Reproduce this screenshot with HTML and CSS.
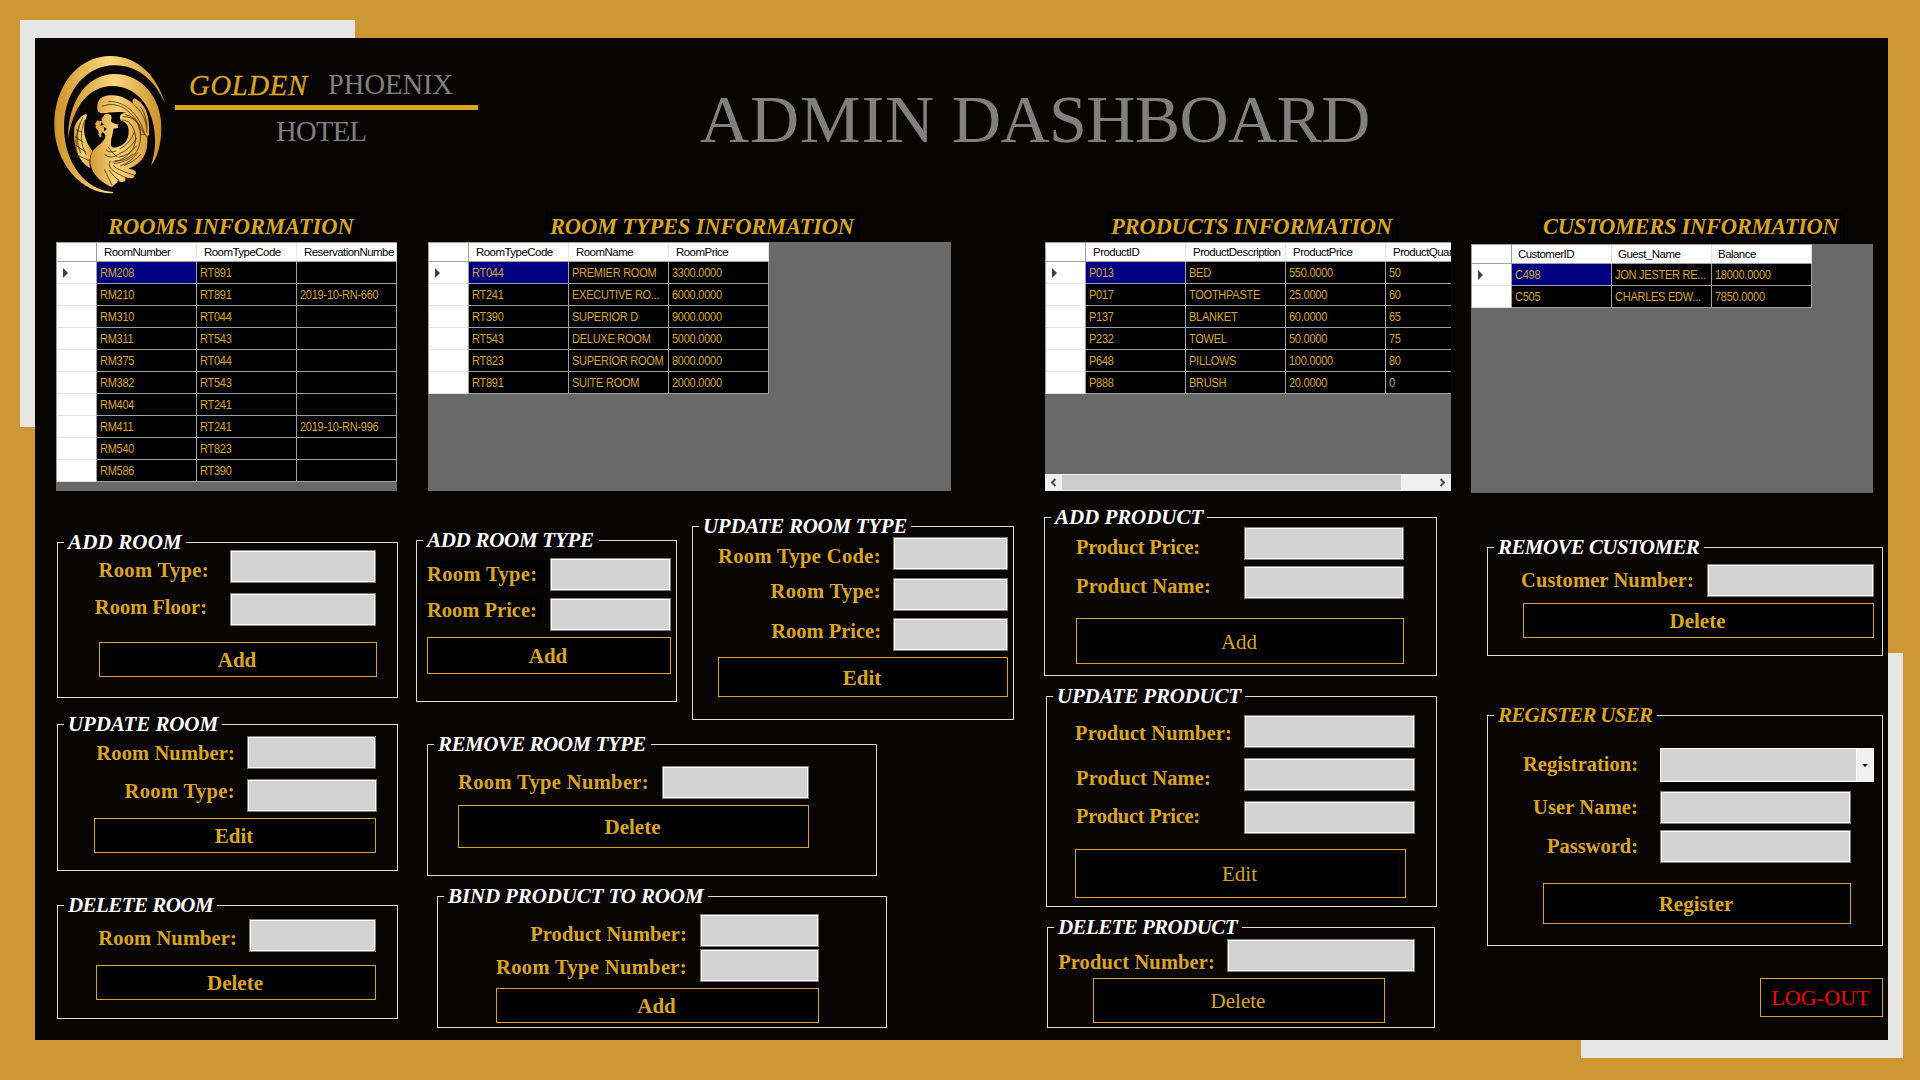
FILE: index.html
```html
<!DOCTYPE html>
<html lang="en">
<head>
<meta charset="utf-8">
<title>Golden Phoenix Hotel - Admin Dashboard</title>
<link rel="stylesheet" href="styles.css">
</head>
<body>
<div class="plate plate-top"></div>
<div class="plate plate-bottom"></div>
<main class="panel">
  <header class="header">
    <svg class="logo" viewBox="0 0 420 480">
      <defs>
        <linearGradient id="gold" x1="0" x2="1" y1="0" y2="0">
          <stop offset="0" stop-color="#cd922d"/><stop offset=".5" stop-color="#fcd77f"/><stop offset="1" stop-color="#cb902c"/>
        </linearGradient>
        <linearGradient id="body" x1="0" x2="1" y1="0" y2="0">
          <stop offset="0" stop-color="#d39a36"/><stop offset=".45" stop-color="#f9d37a"/><stop offset="1" stop-color="#d59c3b"/>
        </linearGradient>
      </defs>
      <path fill="url(#gold)" d="M376 193C352 107 292 48 212 48C112 48 43 140 43 254C43 371 128 463 219 460L219 456C137 452 72 368 72 262C72 148 143 77 222 76C292 75 345 120 376 193Z"/>
      <path fill="url(#gold)" d="M84 296C84 180 143 102 224 102C306 102 364 174 364 262C364 314 352 354 333 377C343 345 346 322 345 292C342 201 289 138 217 138C148 139 101 195 84 296Z"/>
      <path fill="url(#body)" d="M172 202C170 177 190 164 218 166C243 167 264 177 282 194C273 182 279 174 287 176C318 193 330 228 327 285L322 290C325 340 308 369 265 386C292 389 294 404 280 405C289 409 280 421 254 411C263 425 248 430 234 422C231 431 221 433 216 441C184 427 151 401 151 362C151 325 181 318 193 298C199 287 196 281 187 276C180 284 188 294 181 292C171 285 179 276 173 269C161 263 172 259 164 250C172 249 166 239 177 242L186 244C180 235 192 231 192 224C204 218 219 224 214 237C210 247 219 250 237 254C226 259 240 260 232 264L220 266C220 280 213 294 213 307C211 322 217 326 235 320C257 314 266 296 266 274C266 257 260 246 243 242C234 226 246 216 263 220C239 211 207 219 187 220C177 220 171 213 172 202Z"/>
      <path fill="url(#body)" d="M142 224C134 218 118 230 104 258C96 311 112 362 151 385C146 363 149 347 158 334C135 304 122 267 142 224Z"/>
      <g fill="none" stroke="#4b310f" stroke-width="2.5">
        <path d="M186 199C226 184 272 197 311 280M205 185C250 181 297 218 314 284M282 194C300 211 316 233 319 258M302 202C316 220 322 246 320 277"/>
        <path d="M248 230C280 228 301 249 302 285C301 338 274 364 222 371M256 224C285 230 298 249 302 285C309 281 316 283 323 291M244 240C278 238 286 280 287 294C285 336 254 360 218 367"/>
        <path d="M283 276Q272 309 239 327M290 294Q267 332 237 341M289 318Q265 348 235 352M280 341Q253 366 224 362M293 338Q273 367 240 378M303 342Q284 365 252 376M197 328Q207 341 229 333M193 343Q213 360 237 342M204 320Q216 340 233 352"/>
        <path d="M128 232Q99 288 122 340M134 240Q112 297 138 344M121 249Q98 303 114 350M108 269L126 277M104 289L130 307M106 315L139 337M113 346L148 362"/>
        <path d="M211 362C199 386 224 397 266 417M219 376C231 389 255 396 281 405M207 390Q224 414 239 423M193 388Q206 414 216 436"/>
      </g>
      <path fill="#090504" d="M184 246L192 254L181 258ZM191 260L201 267L193 274Z"/>
    </svg>
    <div class="brand">
      <div class="brand-top"><span class="golden">GOLDEN</span><span class="phoenix">PHOENIX</span></div>
      <div class="brand-line"></div>
      <div class="hotel">HOTEL</div>
    </div>
    <h1><span class="loose">ADMIN</span> <span class="close">DASHBOARD</span></h1>
  </header>

  <section class="grids">
    <section class="info info-rooms">
      <h2>ROOMS INFORMATION</h2>
      <div class="view">
        <table>
          <tr><th></th><th><span>RoomNumber</span></th><th><span>RoomTypeCode</span></th><th><span>ReservationNumbe</span></th></tr>
          <tr><td><i></i></td><td class="sel"><span>RM208</span></td><td><span>RT891</span></td><td></td></tr>
          <tr><td></td><td><span>RM210</span></td><td><span>RT891</span></td><td><span>2019-10-RN-660</span></td></tr>
          <tr><td></td><td><span>RM310</span></td><td><span>RT044</span></td><td></td></tr>
          <tr><td></td><td><span>RM311</span></td><td><span>RT543</span></td><td></td></tr>
          <tr><td></td><td><span>RM375</span></td><td><span>RT044</span></td><td></td></tr>
          <tr><td></td><td><span>RM382</span></td><td><span>RT543</span></td><td></td></tr>
          <tr><td></td><td><span>RM404</span></td><td><span>RT241</span></td><td></td></tr>
          <tr><td></td><td><span>RM411</span></td><td><span>RT241</span></td><td><span>2019-10-RN-996</span></td></tr>
          <tr><td></td><td><span>RM540</span></td><td><span>RT823</span></td><td></td></tr>
          <tr><td></td><td><span>RM586</span></td><td><span>RT390</span></td><td></td></tr>
        </table>
      </div>
    </section>
    <section class="info info-types">
      <h2>ROOM TYPES INFORMATION</h2>
      <div class="view">
        <table>
          <tr><th></th><th><span>RoomTypeCode</span></th><th><span>RoomName</span></th><th><span>RoomPrice</span></th></tr>
          <tr><td><i></i></td><td class="sel"><span>RT044</span></td><td><span>PREMIER ROOM</span></td><td><span>3300.0000</span></td></tr>
          <tr><td></td><td><span>RT241</span></td><td><span>EXECUTIVE RO...</span></td><td><span>6000.0000</span></td></tr>
          <tr><td></td><td><span>RT390</span></td><td><span>SUPERIOR D</span></td><td><span>9000.0000</span></td></tr>
          <tr><td></td><td><span>RT543</span></td><td><span>DELUXE ROOM</span></td><td><span>5000.0000</span></td></tr>
          <tr><td></td><td><span>RT823</span></td><td><span>SUPERIOR ROOM</span></td><td><span>8000.0000</span></td></tr>
          <tr><td></td><td><span>RT891</span></td><td><span>SUITE ROOM</span></td><td><span>2000.0000</span></td></tr>
        </table>
      </div>
    </section>
    <section class="info info-products">
      <h2>PRODUCTS INFORMATION</h2>
      <div class="view">
        <table>
          <tr><th></th><th><span>ProductID</span></th><th><span>ProductDescription</span></th><th><span>ProductPrice</span></th><th><span>ProductQuantity</span></th></tr>
          <tr><td><i></i></td><td class="sel"><span>P013</span></td><td><span>BED</span></td><td><span>550.0000</span></td><td><span>50</span></td></tr>
          <tr><td></td><td><span>P017</span></td><td><span>TOOTHPASTE</span></td><td><span>25.0000</span></td><td><span>60</span></td></tr>
          <tr><td></td><td><span>P137</span></td><td><span>BLANKET</span></td><td><span>60.0000</span></td><td><span>65</span></td></tr>
          <tr><td></td><td><span>P232</span></td><td><span>TOWEL</span></td><td><span>50.0000</span></td><td><span>75</span></td></tr>
          <tr><td></td><td><span>P648</span></td><td><span>PILLOWS</span></td><td><span>100.0000</span></td><td><span>80</span></td></tr>
          <tr><td></td><td><span>P888</span></td><td><span>BRUSH</span></td><td><span>20.0000</span></td><td><span>0</span></td></tr>
        </table>
        <div class="scrollbar">
          <svg viewBox="0 0 17 17"><path d="M10.5 5L7 8.5L10.5 12"/></svg>
          <div class="thumb"></div>
          <svg viewBox="0 0 17 17"><path d="M6.5 5L10 8.5L6.5 12"/></svg>
        </div>
      </div>
    </section>
    <section class="info info-customers">
      <h2>CUSTOMERS INFORMATION</h2>
      <div class="view">
        <table>
          <tr><th></th><th><span>CustomerID</span></th><th><span>Guest_Name</span></th><th><span>Balance</span></th></tr>
          <tr><td><i></i></td><td class="sel"><span>C498</span></td><td><span>JON JESTER RE...</span></td><td><span>18000.0000</span></td></tr>
          <tr><td></td><td><span>C505</span></td><td><span>CHARLES EDW...</span></td><td><span>7850.0000</span></td></tr>
        </table>
      </div>
    </section>
  </section>

  <section class="forms">
    <div class="column column-rooms">
      <section class="group add-room">
        <h3>ADD ROOM</h3>
        <div class="row r1"><label class="wide">Room Type:</label><div class="input"></div></div>
        <div class="row r2"><label>Room Floor:</label><div class="input"></div></div>
        <button>Add</button>
      </section>
      <section class="group update-room">
        <h3>UPDATE ROOM</h3>
        <div class="row r1"><label class="mid">Room Number:</label><div class="input"></div></div>
        <div class="row r2"><label class="wide">Room Type:</label><div class="input"></div></div>
        <button>Edit</button>
      </section>
      <section class="group delete-room">
        <h3>DELETE ROOM</h3>
        <div class="row r1"><label class="mid">Room Number:</label><div class="input"></div></div>
        <button>Delete</button>
      </section>
    </div>

    <div class="column column-types">
      <div class="pair">
        <section class="group add-type">
          <h3>ADD ROOM TYPE</h3>
          <div class="row r1"><label class="wide">Room Type:</label><div class="input"></div></div>
          <div class="row r2"><label>Room Price:</label><div class="input"></div></div>
          <button>Add</button>
        </section>
        <section class="group update-type">
          <h3>UPDATE ROOM TYPE</h3>
          <div class="row r1"><label class="wide">Room Type Code:</label><div class="input"></div></div>
          <div class="row r2"><label class="wide">Room Type:</label><div class="input"></div></div>
          <div class="row r3"><label>Room Price:</label><div class="input"></div></div>
          <button>Edit</button>
        </section>
      </div>
      <section class="group remove-type">
        <h3>REMOVE ROOM TYPE</h3>
        <div class="row r1"><label class="wide">Room Type Number:</label><div class="input"></div></div>
        <button>Delete</button>
      </section>
      <section class="group bind">
        <h3>BIND PRODUCT TO ROOM</h3>
        <div class="row r1"><label class="mid">Product Number:</label><div class="input"></div></div>
        <div class="row r2"><label class="wide">Room Type Number:</label><div class="input"></div></div>
        <button>Add</button>
      </section>
    </div>

    <div class="column column-products">
      <section class="group add-product">
        <h3>ADD PRODUCT</h3>
        <div class="row r1"><label class="narrow">Product Price:</label><div class="input"></div></div>
        <div class="row r2"><label class="mid">Product Name:</label><div class="input"></div></div>
        <button class="light">Add</button>
      </section>
      <section class="group update-product">
        <h3>UPDATE PRODUCT</h3>
        <div class="row r1"><label class="mid">Product Number:</label><div class="input"></div></div>
        <div class="row r2"><label class="mid">Product Name:</label><div class="input"></div></div>
        <div class="row r3"><label class="narrow">Product Price:</label><div class="input"></div></div>
        <button class="light">Edit</button>
      </section>
      <section class="group delete-product">
        <h3>DELETE PRODUCT</h3>
        <div class="row r1"><label class="mid">Product Number:</label><div class="input"></div></div>
        <button class="light">Delete</button>
      </section>
    </div>

    <div class="column column-customers">
      <section class="group remove-customer">
        <h3>REMOVE CUSTOMER</h3>
        <div class="row r1"><label class="mid">Customer Number:</label><div class="input"></div></div>
        <button>Delete</button>
      </section>
      <section class="group register">
        <h3>REGISTER USER</h3>
        <div class="row r1"><label>Registration:</label><div class="select"><div class="drop"></div></div></div>
        <div class="row r2"><label class="mid">User Name:</label><div class="input"></div></div>
        <div class="row r3"><label>Password:</label><div class="input"></div></div>
        <button>Register</button>
      </section>
      <button class="logout">LOG-OUT</button>
    </div>
  </section>
</main>
</body>
</html>
```
FILE: styles.css
```css
* { box-sizing: border-box; }

body {
  margin: 0;
  width: 1920px;
  height: 1080px;
  padding: 38px 32px 40px 35px;
  overflow: hidden;
  background: #cd9834;
  font-family: "Liberation Serif", serif;
}

h1, h2, h3 { margin: 0; white-space: nowrap; }

/* light corner plates behind the panel */
.plate { position: absolute; background: #e6e6e6; }
.plate-top { left: 20px; top: 20px; width: 335px; height: 407px; }
.plate-bottom { left: 1581px; top: 653px; width: 322px; height: 405px; }

.panel {
  position: relative;
  width: 1853px;
  height: 1002px;
  background: #080403;
  display: flex;
  flex-direction: column;
}

/* header */
.header { display: flex; height: 174px; flex: none; }
.logo { width: 140px; height: 160px; margin: 2px 0 0 5px; flex: none; display: block; }
.brand { width: 303px; margin-left: -5px; }
.brand-top { display: flex; height: 67px; padding: 30px 0 0 14px; font-size: 28.5px; line-height: 36px; white-space: nowrap; }
.golden { font-style: italic; color: #daa520; width: 139px; letter-spacing: .8px; -webkit-text-stroke: .3px #daa520; }
.phoenix, .hotel { color: #808080; }
.phoenix { margin-top: -1px; }
.brand-line { height: 5px; background: #daa520; }
.hotel { font-size: 28.5px; line-height: 36px; padding: 4px 0 0 101px; letter-spacing: -.6px; }
h1 { margin: 41px 0 0 222px; font-size: 68px; line-height: 80px; font-weight: 400; color: #808080; }
.loose { letter-spacing: .9px; }
.close { letter-spacing: -.6px; }

/* data grids */
.grids { display: flex; height: 288px; flex: none; }
.info { display: flex; flex-direction: column; flex: none; }
.info h2 {
  height: 28px;
  padding-left: 5px;
  background: #000;
  color: #daa520;
  font-size: 22.5px;
  line-height: 30px;
  font-style: italic;
  letter-spacing: -.17px;
}
.view {
  margin-top: 2px;
  height: 249px;
  background: #696969;
  overflow: hidden;
  display: flex;
  flex-direction: column;
  font-family: "Liberation Sans", sans-serif;
  font-size: 11px;
}
.info-rooms { width: 341px; margin-left: 21px; }
.info-rooms h2 { width: 257px; margin-left: 47px; letter-spacing: 0; }
.info-types { width: 523px; margin-left: 31px; }
.info-types h2 { width: 315px; margin-left: 117px; }
.info-products { width: 406px; margin-left: 94px; }
.info-products h2 { width: 292px; margin-left: 61px; }
.info-customers { width: 402px; margin-left: 20px; }
.info-customers h2 { width: 307px; margin-left: 67px; letter-spacing: -.29px; }
.info-customers .view { margin-top: 4px; }

table {
  width: 341px;
  flex: none;
  table-layout: fixed;
  border-spacing: 0;
  border-left: 1px solid #a0a0a0;
  border-top: 1px solid #a0a0a0;
}
.info-products table { width: 441px; }
th, td { width: 100px; padding: 0; overflow: hidden; white-space: nowrap; text-align: left; font-weight: 400; }
th:first-child, td:first-child { width: 40px; }
th { height: 19px; padding-left: 7px; background: #fff; color: #000; border-right: 1px solid #e3e3e3; border-bottom: 1px solid #a0a0a0; }
.info-customers th { padding-left: 6px; }
th:first-child { border-right-color: #a0a0a0; }
td { height: 22px; padding: 0 0 2px 3px; background: #000; color: #daa520; border-right: 1px solid #a0a0a0; border-bottom: 1px solid #a0a0a0; }
td:first-child { background: #fff; border-bottom-color: #e3e3e3; padding-left: 6px; }
td.sel { background: #000080; }
table span { display: block; line-height: 16px; letter-spacing: -.25px; transform: scaleY(1.13); }
th span { font-size: 11.5px; letter-spacing: -.54px; transform: none; }
td i { display: block; width: 0; border: 5px solid transparent; border-left-color: #404040; border-right-width: 0; margin-top: 3px; }

.scrollbar { height: 17px; margin-top: auto; background: #f0f0f0; display: flex; }
.scrollbar svg { width: 17px; height: 17px; fill: none; stroke: #505050; stroke-width: 2; }
.thumb { width: 339px; height: 15px; margin: 1px 33px 0 0; background: #cdcdcd; }

/* forms */
.forms { display: flex; height: 540px; }
.column { display: flex; flex-direction: column; flex: none; }
.pair { display: flex; align-items: flex-start; }
.group {
  position: relative;
  flex: none;
  display: flex;
  flex-direction: column;
  align-items: flex-end;
  border: 1px solid #dcdcdc;
}
.group h3 {
  position: absolute;
  left: 6px;
  top: -12px;
  height: 20px;
  padding-left: 4px;
  background: #080403;
  color: #fff;
  font-size: 21px;
  line-height: 23px;
  font-style: italic;
}
.row { display: flex; align-items: flex-start; height: 33px; flex: none; }
label { padding-top: 1px; color: #daa520; font-size: 20.5px; line-height: 23px; font-weight: 700; white-space: nowrap; flex: none; }
.wide { letter-spacing: .36px; }
.mid { letter-spacing: .12px; }
.narrow { letter-spacing: -.27px; }
.input { height: 33px; flex: none; background: #d3d3d3; border: 1px solid #7a7a7a; box-shadow: inset 0 0 0 1px #fff; }
button {
  padding: 1px 2px 0 0;
  flex: none;
  background: #000;
  border: 1px solid #daa520;
  color: #daa520;
  font: 700 21px/24px "Liberation Serif", serif;
}
button.light { font-weight: 400; }

.column-rooms { margin-left: 22px; width: 341px; }
.column-types { margin-left: 18px; width: 598px; }
.column-products { margin-left: 30px; width: 393px; }
.column-customers { margin-left: 50px; width: 396px; }

.add-room { margin-top: 42px; height: 156px; }
.add-room h3 { width: 122px; letter-spacing: .15px; }
.add-room .row { margin-right: 21px; }
.add-room .input { width: 146px; }
.add-room .r1 { margin-top: 7px; }
.add-room .r1 label { margin: 8px 21px 0 0; }
.add-room .r2 { margin-top: 10px; }
.add-room .r2 label { margin: 2px 23px 0 0; }
.add-room button { width: 278px; height: 35px; margin: 16px 20px 0 0; }

.update-room { margin-top: 26px; height: 147px; }
.update-room h3 { width: 158px; letter-spacing: -.1px; }
.update-room .r1 { margin: 11px 21px 0 0; }
.update-room .r1 .input { width: 129px; }
.update-room .r1 label { margin: 5px 12px 0 0; }
.update-room .r2 { margin: 10px 20px 0 0; }
.update-room .r2 .input { width: 130px; }
.update-room .r2 label { margin: 0 12px 0 0; }
.update-room button { width: 282px; height: 35px; margin: 6px 21px 0 0; }

.delete-room { margin-top: 34px; height: 114px; }
.delete-room h3 { width: 153px; letter-spacing: -.55px; }
.delete-room .row { margin: 13px 21px 0 0; }
.delete-room .input { width: 127px; }
.delete-room label { margin: 7px 12px 0 0; }
.delete-room button { width: 280px; height: 35px; margin: 13px 21px 0 0; }

.add-type { width: 261px; height: 162px; margin-top: 40px; }
.add-type h3 { width: 176px; letter-spacing: -.28px; }
.add-type .row { margin-right: 5px; }
.add-type .input { width: 121px; }
.add-type label { padding: 1px 5px 0; height: 26px; line-height: 24px; background: #000; }
.add-type .r1 { margin-top: 17px; }
.add-type .r1 label { width: 122px; margin: 3px 6px 0 0; }
.add-type .r2 { margin-top: 7px; }
.add-type .r2 label { width: 120px; margin: -1px 8px 0 0; }
.add-type button { width: 244px; height: 37px; margin: 6px 5px 0 0; padding-bottom: 1px; }

.update-type { width: 322px; height: 194px; margin: 26px 0 0 15px; }
.update-type h3 { width: 212px; letter-spacing: -.3px; }
.update-type .row { margin-right: 5px; }
.update-type .input { width: 115px; }
.update-type label { margin-right: 12px; }
.update-type .r1 { margin-top: 10px; }
.update-type .r1 label { margin-top: 7px; }
.update-type .r2 { margin-top: 8px; }
.update-type .r2 label { margin-top: 1px; }
.update-type .r3 { margin-top: 7px; }
.update-type .r3 label { margin-top: 1px; }
.update-type button { width: 290px; height: 40px; margin: 6px 5px 0 0; }

.remove-type { width: 450px; height: 132px; margin: 24px 0 0 11px; }
.remove-type h3 { width: 217px; letter-spacing: -.5px; }
.remove-type .row { margin: 21px 67px 0 0; }
.remove-type .input { width: 147px; }
.remove-type label { margin: 4px 13px 0 0; }
.remove-type button { width: 351px; height: 43px; margin: 6px 67px 0 0; padding-bottom: 1px; }

.bind { width: 450px; height: 132px; margin: 20px 0 0 21px; }
.bind h3 { width: 264px; letter-spacing: -.13px; }
.bind .row { margin-right: 67px; }
.bind .input { width: 119px; }
.bind .r1 { margin-top: 17px; }
.bind .r1 label { margin: 8px 13px 0 0; }
.bind .r2 { margin-top: 2px; }
.bind .r2 label { margin: 6px 13px 0 0; }
.bind button { width: 323px; height: 35px; margin: 6px 67px 0 0; }

.add-product { height: 159px; margin-top: 17px; }
.add-product h3 { width: 156px; letter-spacing: -.05px; }
.add-product .row { margin-right: 32px; }
.add-product .input { width: 160px; }
.add-product label { width: 168px; }
.add-product .r1 { margin-top: 9px; }
.add-product .r1 label { margin-top: 8px; }
.add-product .r2 { margin-top: 6px; }
.add-product .r2 label { margin-top: 8px; }
.add-product button { width: 328px; height: 46px; margin: 19px 32px 0 0; }

.update-product { height: 211px; margin: 20px 0 0 2px; }
.update-product h3 { width: 192px; letter-spacing: -.25px; }
.update-product .row { margin-right: 21px; }
.update-product .input { width: 171px; }
.update-product label { width: 168px; }
.update-product .r1 { margin-top: 18px; }
.update-product .r1 label { width: 169px; margin-top: 6px; }
.update-product .r2 { margin-top: 10px; }
.update-product .r2 label { margin-top: 8px; }
.update-product .r3 { margin-top: 10px; }
.update-product .r3 label { margin-top: 3px; }
.update-product button { width: 331px; height: 49px; margin: 15px 30px 0 0; }

.delete-product { width: 388px; height: 101px; margin: 20px 0 0 3px; }
.delete-product h3 { width: 188px; letter-spacing: -.6px; }
.delete-product .row { margin: 11px 19px 0 0; }
.delete-product .input { width: 188px; }
.delete-product label { margin: 11px 12px 0 0; }
.delete-product button { width: 292px; height: 45px; margin: 6px 49px 0 0; }

.remove-customer { height: 109px; margin-top: 47px; }
.remove-customer h3 { width: 210px; letter-spacing: -.6px; }
.remove-customer .row { margin: 16px 8px 0 0; }
.remove-customer .input { width: 167px; }
.remove-customer label { margin: 4px 13px 0 0; }
.remove-customer button { width: 351px; height: 35px; margin: 6px 8px 0 0; }

.register { height: 231px; margin-top: 59px; }
.register h3 { width: 163px; color: #daa520; letter-spacing: -.75px; }
.register label { margin-right: 22px; }
.register .input { width: 191px; }
.register .r1 { height: 34px; margin: 32px 8px 0 0; }
.register .r1 label { margin-top: 4px; }
.select { width: 214px; height: 34px; border: 1px solid #fff; background: #d3d3d3; display: flex; justify-content: flex-end; }
.drop { width: 17px; height: 32px; background: #f0f0f0; border-left: 1px solid #fff; display: flex; align-items: center; justify-content: center; }
.drop::before { content: ""; border: 3px solid transparent; border-top-color: #000; border-bottom-width: 0; }
.register .r2 { margin: 9px 31px 0 0; }
.register .r2 label { margin-top: 4px; }
.register .r3 { margin: 6px 31px 0 0; }
.register .r3 label { margin-top: 4px; }
.register button { width: 308px; height: 41px; margin: 20px 31px 0 0; padding-bottom: 1px; }

.register ~ button.logout { width: 123px; height: 39px; margin: 32px 0 0 auto; padding: 1px 2px 0 0; color: #f00; font-size: 22px; font-weight: 400; letter-spacing: .1px; }
```
